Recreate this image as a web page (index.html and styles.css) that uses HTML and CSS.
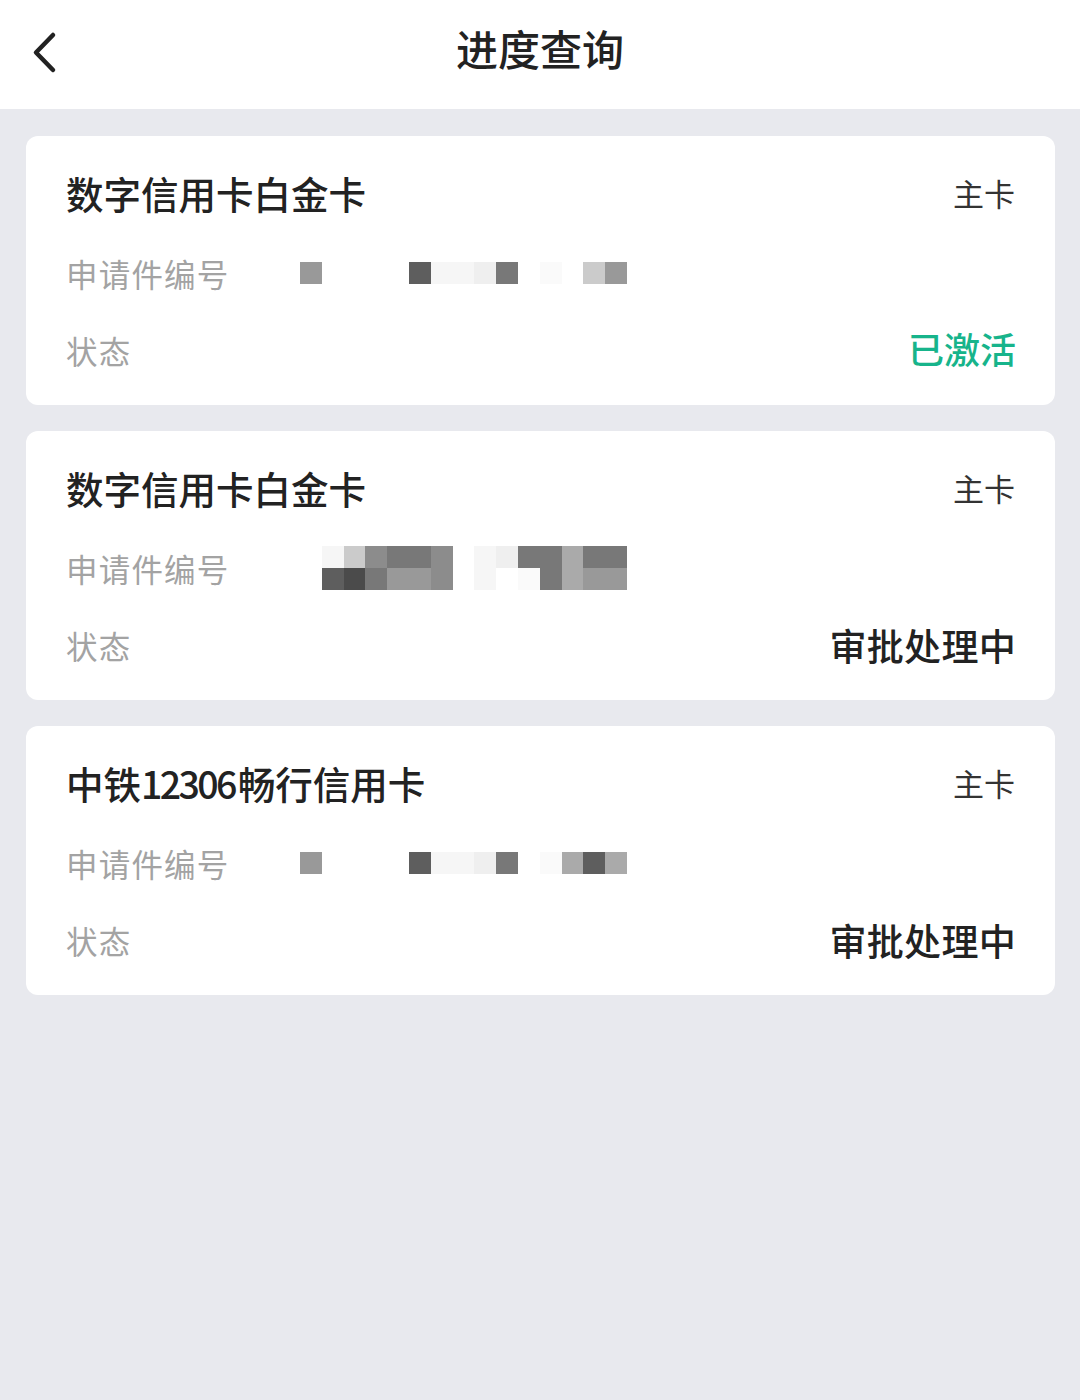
FILE: index.html
```html
<!DOCTYPE html>
<html lang="zh-CN">
<head>
<meta charset="utf-8">
<title>进度查询</title>
<link rel="stylesheet" href="styles.css">
</head>
<body>
<div class="page">
  <header class="topbar">
    <span class="back">
      <svg width="30" height="44" viewBox="0 0 30 44"><path d="M22 4 L5 21.5 L22 39" fill="none" stroke="#222" stroke-width="4.5" stroke-linecap="round" stroke-linejoin="round"/></svg>
    </span>
    <h1 class="title">进度查询</h1>
  </header>

  <main class="list">
    <section class="card">
      <div class="row head">
        <span class="name">数字信用卡白金卡</span>
        <span class="type">主卡</span>
      </div>
      <div class="row">
        <span class="label">申请件编号</span>
        <div class="mosaic">
          <div class="mrow">
            <i class="m3"></i><i class="w"></i><i class="w"></i><i class="w"></i><i class="w"></i><i class="d3"></i><i class="l1"></i><i class="l1"></i><i class="l2"></i><i class="d2"></i><i class="w"></i><i class="l0"></i><i class="w"></i><i class="m1"></i><i class="m3"></i>
          </div>
        </div>
      </div>
      <div class="row">
        <span class="label">状态</span>
        <span class="status ok">已激活</span>
      </div>
    </section>

    <section class="card">
      <div class="row head">
        <span class="name">数字信用卡白金卡</span>
        <span class="type">主卡</span>
      </div>
      <div class="row">
        <span class="label">申请件编号</span>
        <div class="mosaic">
          <div class="mrow">
            <i class="w"></i><i class="l1"></i><i class="m1"></i><i class="d1"></i><i class="d2"></i><i class="d2"></i><i class="d1"></i><i class="w"></i><i class="l1"></i><i class="l2"></i><i class="d2"></i><i class="d2"></i><i class="m2"></i><i class="d2"></i><i class="d2"></i>
          </div>
          <div class="mrow">
            <i class="w"></i><i class="d3"></i><i class="d4"></i><i class="d2"></i><i class="m3"></i><i class="m3"></i><i class="d1"></i><i class="w"></i><i class="l1"></i><i class="w"></i><i class="l0"></i><i class="d2"></i><i class="m2"></i><i class="m3"></i><i class="m3"></i>
          </div>
        </div>
      </div>
      <div class="row">
        <span class="label">状态</span>
        <span class="status">审批处理中</span>
      </div>
    </section>

    <section class="card">
      <div class="row head">
        <span class="name">中铁<span class="num">12306</span>畅行信用卡</span>
        <span class="type">主卡</span>
      </div>
      <div class="row">
        <span class="label">申请件编号</span>
        <div class="mosaic">
          <div class="mrow">
            <i class="m3"></i><i class="w"></i><i class="w"></i><i class="w"></i><i class="w"></i><i class="d3"></i><i class="l1"></i><i class="l1"></i><i class="l2"></i><i class="d2"></i><i class="w"></i><i class="l0"></i><i class="m2"></i><i class="d3"></i><i class="m2"></i>
          </div>
        </div>
      </div>
      <div class="row">
        <span class="label">状态</span>
        <span class="status">审批处理中</span>
      </div>
    </section>
  </main>
</div>
</body>
</html>
```

FILE: styles.css
```css
* { box-sizing: border-box; margin: 0; padding: 0; }

html, body {
  background: #e8e9ee;
}

body {
  font-family: "Noto Sans CJK SC", "Noto Sans", "Liberation Sans", sans-serif;
  color: #222;
}

.page {
  width: 1080px;
  min-height: 1400px;
}

.topbar {
  position: relative;
  height: 109px;
  background: #fff;
  display: flex;
  align-items: center;
  justify-content: center;
}

.back {
  position: absolute;
  left: 31px;
  top: 31px;
  width: 30px;
  height: 44px;
  display: flex;
}

.title {
  font-size: 42px;
  font-weight: 500;
  line-height: 1;
  color: #222;
  margin-top: -14px;
}

.list {
  padding: 27px 25px 0 26px;
  display: flex;
  flex-direction: column;
  gap: 26px;
}

.card {
  background: #fff;
  border-radius: 12px;
  height: 269px;
  padding: 36px 40px 0 40px;
  display: flex;
  flex-direction: column;
  gap: 31px;
}

.row {
  display: flex;
  align-items: center;
  height: 46px;
}

.row.head {
  justify-content: space-between;
  margin-bottom: 1px;
}

.name {
  font-size: 37.5px;
  font-weight: 500;
  line-height: 46px;
  color: #222;
  margin-top: -4px;
}

.num {
  letter-spacing: -2.6px;
  margin-right: 3px;
}

.type {
  font-size: 31px;
  line-height: 46px;
  color: #333;
  margin-top: -4px;
}

.label {
  width: 234px;
  font-size: 31.5px;
  line-height: 46px;
  color: #a3a3a3;
  letter-spacing: 1.2px;
  flex: none;
}

.status {
  margin-left: auto;
  font-size: 37px;
  font-weight: 500;
  line-height: 46px;
  color: #222;
  letter-spacing: 0.3px;
  margin-right: -1px;
}

.status.ok {
  color: #17b48b;
  font-size: 36px;
  letter-spacing: 0;
  margin-top: -4px;
}

.mosaic {
  display: flex;
  flex-direction: column;
}

.mrow {
  display: flex;
}

.mrow i {
  display: block;
  width: 21.8px;
  height: 22px;
}

.w  { background: #ffffff; }
.l0 { background: #fafafa; }
.l1 { background: #f6f6f6; }
.l2 { background: #efefef; }
.m1 { background: #cbcbcb; }
.m2 { background: #aaaaaa; }
.m3 { background: #999999; }
.d1 { background: #8c8c8c; }
.d2 { background: #787878; }
.d3 { background: #5e5e5e; }
.d4 { background: #4b4b4b; }
```
